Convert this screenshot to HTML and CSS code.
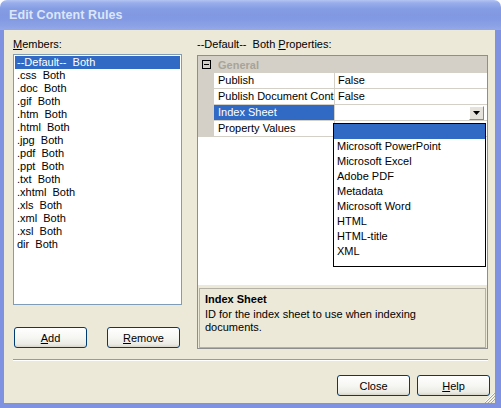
FILE: index.html
```html
<!DOCTYPE html>
<html lang="en">
<head>
    <meta charset="UTF-8">
    <title>Edit Content Rules</title>
    <link rel="stylesheet" href="styles.css">
</head>
<body>
    <div class="window">
        <div class="titlebar"><span class="title">Edit Content Rules</span></div>
        <div class="client">
            <div class="main">
                <!-- members list -->
                <div class="left">
                    <div class="label"><u>M</u>embers:</div>
                    <ul class="list">
                        <li class="sel">--Default--  Both</li>
                        <li>.css  Both</li>
                        <li>.doc  Both</li>
                        <li>.gif  Both</li>
                        <li>.htm  Both</li>
                        <li>.html  Both</li>
                        <li>.jpg  Both</li>
                        <li>.pdf  Both</li>
                        <li>.ppt  Both</li>
                        <li>.txt  Both</li>
                        <li>.xhtml  Both</li>
                        <li>.xls  Both</li>
                        <li>.xml  Both</li>
                        <li>.xsl  Both</li>
                        <li>dir  Both</li>
                    </ul>
                    <div class="leftbtns">
                        <button class="btn"><u>A</u>dd</button>
                        <button class="btn"><u>R</u>emove</button>
                    </div>
                </div>

                <!-- property grid -->
                <div class="right">
                    <div class="label">--Default--  Both <u>P</u>roperties:</div>
                    <div class="pgrid">
                        <div class="pview">
                            <div class="cat"><span class="minus"></span><span class="catname">General</span></div>
                            <div class="prow">
                                <div class="pmargin"></div>
                                <div class="pname">Publish</div>
                                <div class="pval">False</div>
                            </div>
                            <div class="prow">
                                <div class="pmargin"></div>
                                <div class="pname">Publish Document Cont</div>
                                <div class="pval">False</div>
                            </div>
                            <div class="prow">
                                <div class="pmargin"></div>
                                <div class="pname sel">Index Sheet</div>
                                <div class="pval combo">
                                    <span></span>
                                    <span class="ddbtn">
                                        <svg width="7" height="4" viewBox="0 0 7 4"><path d="M0 0H7L3.5 4Z" fill="#000"/></svg>
                                    </span>
                                </div>
                            </div>
                            <div class="prow">
                                <div class="pmargin"></div>
                                <div class="pname">Property Values</div>
                                <div class="pval"></div>
                            </div>

                            <div class="dropdown">
                                <div class="sel"></div>
                                <div>Microsoft PowerPoint</div>
                                <div>Microsoft Excel</div>
                                <div>Adobe PDF</div>
                                <div>Metadata</div>
                                <div>Microsoft Word</div>
                                <div>HTML</div>
                                <div>HTML-title</div>
                                <div>XML</div>
                            </div>
                        </div>
                        <div class="pdesc">
                            <div class="pdesc-title">Index Sheet</div>
                            <p>ID for the index sheet to use when indexing documents.</p>
                        </div>
                    </div>
                </div>
            </div>

            <div class="sep"></div>

            <div class="bottombtns">
                <button class="btn">Close</button>
                <button class="btn"><u>H</u>elp</button>
            </div>

            <svg class="grip" width="12" height="12" viewBox="0 0 12 12">
                <path d="M11 2L2 11M11 5L5 11M11 8L8 11" stroke="#fff" stroke-width="1"/>
                <path d="M12 2L2 12M12 5L5 12M12 8L8 12" stroke="#A9A698" stroke-width="1"/>
            </svg>
        </div>
    </div>
</body>
</html>
```

FILE: styles.css
```css
body{
    margin: 0;
    background: #fff;
    font-family: "Liberation Sans", Arial, sans-serif;
    font-size: 11px;
    color: #000;
}
.window{
    width: 501px;
    height: 408px;
    display: flex;
    flex-direction: column;
}
/* inactive XP title bar */
.titlebar{
    height: 30px;
    flex-shrink: 0;
    box-sizing: border-box;
    padding-left: 9px;
    display: flex;
    align-items: center;
    border-radius: 7px 7px 0 0;
    background: linear-gradient(to bottom, #B3C4F2 0, #98AEEA 3px, #849CE3 9px, #8198E2 18px, #8CA2E6 26px, #94A9E9 30px);
}
.title{
    color: #DCE6F8;
    font-weight: bold;
    font-size: 12.5px;
    letter-spacing: 0.1px;
}
.client{
    flex: 1;
    position: relative;
    box-sizing: border-box;
    background: #ECE9D8;
    border: solid #7F92E1;
    border-width: 0 6px 5px 4px;
    padding: 8px 7px 0 9px;
}
.main{
    display: flex;
    gap: 15px;
}
.left{
    width: 169px;
}
.right{
    width: 291px;
}
.label{
    height: 13px;
    line-height: 13px;
    margin-bottom: 3px;
    white-space: pre;
}
.right .label{
    margin-bottom: 4px;
}
.list{
    list-style: none;
    margin: 0;
    padding: 1px;
    height: 251px;
    box-sizing: border-box;
    border: 1px solid #7F9DB9;
    background: #fff;
}
.list li{
    line-height: 13px;
    padding-left: 2px;
    white-space: pre;
}
.list li.sel{
    background: #316AC5;
    color: #fff;
}
.leftbtns{
    display: flex;
    gap: 20px;
    margin-top: 22px;
    padding-left: 1px;
}
/* XP style push button */
.btn{
    width: 73px;
    height: 21px;
    padding: 0;
    font-family: inherit;
    font-size: 11px;
    color: #000;
    border: 1px solid #003C74;
    border-radius: 3px;
    background: linear-gradient(to bottom, #FFFFFF 0, #F6F6F3 50%, #ECEBE4 85%, #D8D6CB 100%);
}
.pgrid{
    height: 294px;
    box-sizing: border-box;
    border: 1px solid #8E8E8E;
    display: flex;
    flex-direction: column;
}
.pview{
    height: 229px;
    flex-shrink: 0;
    position: relative;
    background: #fff;
}
.cat{
    height: 17px;
    display: flex;
    align-items: center;
    background: #D4D0C8;
}
.minus{
    width: 9px;
    height: 9px;
    box-sizing: border-box;
    margin-left: 4px;
    border: 1px solid #000;
    position: relative;
}
.minus::after{
    content: "";
    position: absolute;
    left: 1px;
    top: 3px;
    width: 5px;
    height: 1px;
    background: #000;
}
.catname{
    margin-left: 7px;
    font-weight: bold;
    color: #A7A498;
}
.prow{
    display: flex;
    height: 16px;
}
.pmargin{
    width: 16px;
    background: #D4D0C8;
}
.pname{
    width: 120px;
    box-sizing: border-box;
    padding-left: 4px;
    line-height: 15px;
    white-space: nowrap;
    overflow: hidden;
    border-bottom: 1px solid #D4D0C8;
}
.pname.sel{
    background: #316AC5;
    color: #fff;
}
.pval{
    flex: 1;
    padding-left: 3px;
    line-height: 15px;
    border-left: 1px solid #D4D0C8;
    border-bottom: 1px solid #D4D0C8;
}
.combo{
    display: flex;
    justify-content: space-between;
    align-items: center;
    padding-right: 3px;
}
.ddbtn{
    width: 15px;
    height: 14px;
    box-sizing: border-box;
    display: flex;
    align-items: center;
    justify-content: center;
    background: #E4E2DA;
    border: 1px solid;
    border-color: #fff #8C8A80 #8C8A80 #fff;
}
/* open list of the index sheet combo */
.dropdown{
    position: absolute;
    left: 135px;
    top: 67px;
    width: 153px;
    height: 144px;
    box-sizing: border-box;
    border: 1px solid #000;
    background: #fff;
}
.dropdown div{
    height: 15px;
    line-height: 15px;
    padding-left: 3px;
}
.dropdown .sel{
    background: #316AC5;
}
.pdesc{
    height: 60px;
    flex-shrink: 0;
    box-sizing: border-box;
    margin: 3px 1px 0 1px;
    padding: 4px 5px;
    border: 1px solid #B5B2A5;
}
.pdesc-title{
    font-weight: bold;
    line-height: 13px;
}
.pdesc p{
    margin: 2px 0 0;
    line-height: 13px;
    max-width: 240px;
}
.sep{
    margin-top: 10px;
    border-top: 1px solid #9D9A8E;
    border-bottom: 1px solid #fff;
}
.bottombtns{
    display: flex;
    justify-content: flex-end;
    gap: 7px;
    margin-top: 14px;
    margin-right: -2px;
}
.grip{
    position: absolute;
    right: 0;
    bottom: 0;
}
```
